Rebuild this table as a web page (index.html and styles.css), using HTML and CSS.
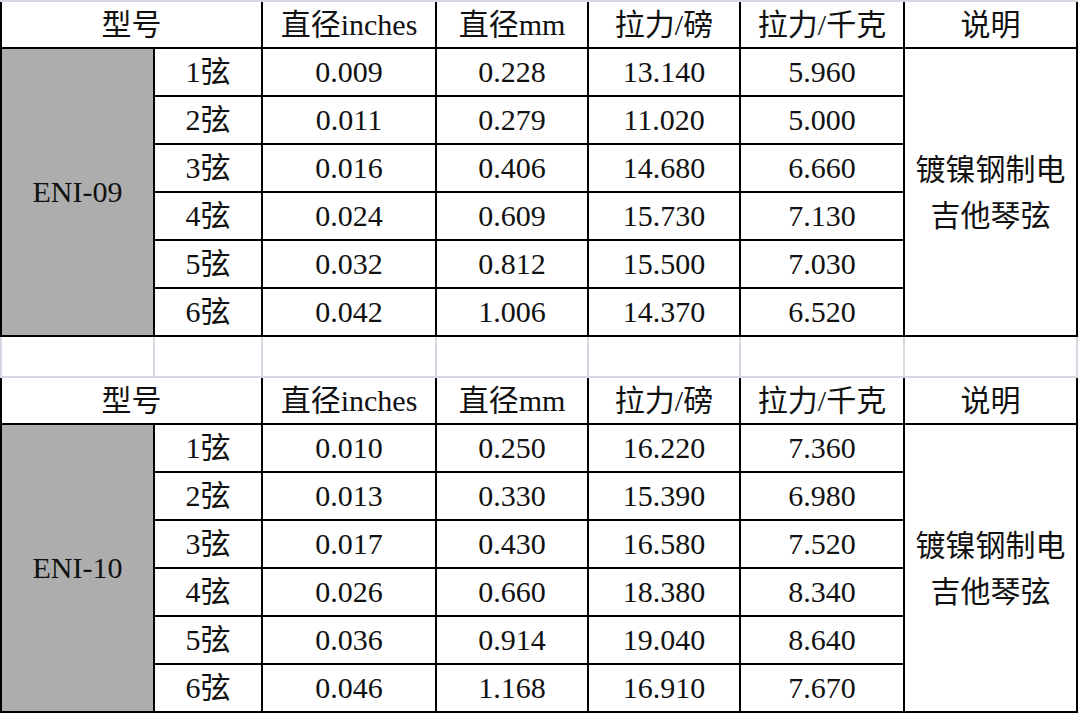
FILE: index.html
```html
<!DOCTYPE html>
<html lang="zh-CN">
<head>
<meta charset="utf-8">
<title>ENI 吉他琴弦规格</title>
<link rel="stylesheet" href="styles.css">
</head>
<body>
<div class="sheet">
  <div class="topline"></div>
  <div class="tbl">
    <div class="cell span2">型号</div>
    <div class="cell">直径inches</div>
    <div class="cell">直径mm</div>
    <div class="cell">拉力/磅</div>
    <div class="cell">拉力/千克</div>
    <div class="cell">说明</div>

    <div class="cell model">ENI-09</div>
    <div class="cell">1弦</div><div class="cell">0.009</div><div class="cell">0.228</div><div class="cell">13.140</div><div class="cell">5.960</div>
    <div class="cell desc">镀镍钢制电<br>吉他琴弦</div>
    <div class="cell">2弦</div><div class="cell">0.011</div><div class="cell">0.279</div><div class="cell">11.020</div><div class="cell">5.000</div>
    <div class="cell">3弦</div><div class="cell">0.016</div><div class="cell">0.406</div><div class="cell">14.680</div><div class="cell">6.660</div>
    <div class="cell">4弦</div><div class="cell">0.024</div><div class="cell">0.609</div><div class="cell">15.730</div><div class="cell">7.130</div>
    <div class="cell">5弦</div><div class="cell">0.032</div><div class="cell">0.812</div><div class="cell">15.500</div><div class="cell">7.030</div>
    <div class="cell">6弦</div><div class="cell">0.042</div><div class="cell">1.006</div><div class="cell">14.370</div><div class="cell">6.520</div>
  </div>

  <div class="spacer">
    <div class="cell"></div><div class="cell"></div><div class="cell"></div><div class="cell"></div>
    <div class="cell"></div><div class="cell"></div><div class="cell"></div>
  </div>

  <div class="tbl">
    <div class="cell span2">型号</div>
    <div class="cell">直径inches</div>
    <div class="cell">直径mm</div>
    <div class="cell">拉力/磅</div>
    <div class="cell">拉力/千克</div>
    <div class="cell">说明</div>

    <div class="cell model">ENI-10</div>
    <div class="cell">1弦</div><div class="cell">0.010</div><div class="cell">0.250</div><div class="cell">16.220</div><div class="cell">7.360</div>
    <div class="cell desc">镀镍钢制电<br>吉他琴弦</div>
    <div class="cell">2弦</div><div class="cell">0.013</div><div class="cell">0.330</div><div class="cell">15.390</div><div class="cell">6.980</div>
    <div class="cell">3弦</div><div class="cell">0.017</div><div class="cell">0.430</div><div class="cell">16.580</div><div class="cell">7.520</div>
    <div class="cell">4弦</div><div class="cell">0.026</div><div class="cell">0.660</div><div class="cell">18.380</div><div class="cell">8.340</div>
    <div class="cell">5弦</div><div class="cell">0.036</div><div class="cell">0.914</div><div class="cell">19.040</div><div class="cell">8.640</div>
    <div class="cell">6弦</div><div class="cell">0.046</div><div class="cell">1.168</div><div class="cell">16.910</div><div class="cell">7.670</div>
  </div>
</div>
</body>
</html>
```
FILE: styles.css
```css
html, body {
  margin: 0;
  padding: 0;
  background: #ffffff;
}

.sheet {
  width: 1078px;
  display: flex;
  flex-direction: column;
  font-family: "Liberation Serif", "Noto Sans CJK SC", serif;
  font-size: 30px;
  color: #111111;
}

.topline {
  height: 2px;
  background: #d7d7e1;
}

.tbl,
.spacer {
  display: grid;
  grid-template-columns: 151px 106px 172px 150px 150px 162px 171px;
  gap: 2px;
  padding: 0 2px 2px 2px;
}

.tbl {
  grid-template-rows: 45px repeat(6, 46px);
  background: #000000;
}

.spacer {
  grid-template-rows: 39px;
  background: #d7d7e1;
}

.cell {
  background: #ffffff;
  display: flex;
  align-items: center;
  justify-content: center;
  text-align: center;
  line-height: 1;
  white-space: nowrap;
}

.span2 {
  grid-column: span 2;
}

.model {
  grid-row: span 6;
  background: #adadad;
}

.desc {
  grid-column: 7;
  grid-row: 2 / span 6;
  line-height: 46px;
  padding-top: 2px;
}
```
